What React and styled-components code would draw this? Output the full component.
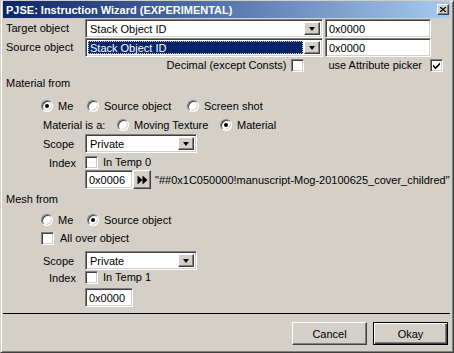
import React from "react";
import styled, { createGlobalStyle } from "styled-components";

const GlobalStyle = createGlobalStyle`
  body {
    margin: 0;
    background: #d4d0c8;
    font-family: "Liberation Sans", Arial, sans-serif;
    font-size: 11px;
    color: #000;
  }
`;

const Window = styled.div`
  width: 454px;
  height: 353px;
  box-sizing: border-box;
  display: flex;
  flex-direction: column;
  background: #d4d0c8;
  border: 1px solid;
  border-color: #d4d0c8 #404040 #404040 #d4d0c8;
  box-shadow: inset 1px 1px #fff, inset -1px -1px #808080;
  padding: 0 3px 3px 2px;
`;

const TitleBar = styled.div`
  height: 17px;
  display: flex;
  align-items: center;
  justify-content: space-between;
  padding: 0 1px 0 3px;
  background: linear-gradient(to right, #0a246a, #a6caf0);
  color: #fff;
  font-weight: bold;
  font-size: 11px;
  white-space: nowrap;
`;

const CloseButton = styled.div`
  width: 12px;
  height: 11px;
  box-sizing: border-box;
  display: flex;
  align-items: center;
  justify-content: center;
  background: #d4d0c8;
  border: 1px solid;
  border-color: #fff #404040 #404040 #fff;
  box-shadow: inset -1px -1px #808080;
`;

const Content = styled.div`
  display: flex;
  flex-direction: column;
  padding-left: 3px;
`;

const FieldRow = styled.div`
  display: grid;
  grid-template-columns: 77px 238px 106px;
  column-gap: 2px;
  align-items: center;
  height: 19px;
  margin-top: ${(p) => p.$top || 0}px;
`;

const Row = styled.div`
  display: flex;
  align-items: center;
  height: ${(p) => p.$h || 13}px;
  margin-top: ${(p) => p.$top || 0}px;
  padding-left: ${(p) => p.$left || 0}px;
  white-space: nowrap;
`;

const RightRow = styled(Row)`
  justify-content: flex-end;
  padding-right: 7px;
`;

const Label = styled.span`
  line-height: 13px;
`;

const SectionLabel = styled.div`
  line-height: 13px;
  margin-top: ${(p) => p.$top}px;
`;

const LabelCell = styled.span`
  width: ${(p) => p.$w}px;
  padding-left: ${(p) => p.$indent || 0}px;
  box-sizing: border-box;
  flex: none;
`;

const sunken = `
  box-sizing: border-box;
  background: #fff;
  border: 1px solid;
  border-color: #808080 #fff #fff #808080;
  box-shadow: inset 1px 1px #404040, inset -1px -1px #d4d0c8;
`;

const raised = `
  box-sizing: border-box;
  background: #d4d0c8;
  border: 1px solid;
  border-color: #fff #404040 #404040 #fff;
  box-shadow: inset -1px -1px #808080, inset 1px 1px #d4d0c8;
`;

const Combo = styled.div`
  ${sunken}
  width: ${(p) => p.$w}px;
  height: 19px;
  display: flex;
  padding: 2px;
`;

const ComboText = styled.div`
  flex: 1;
  display: flex;
  align-items: center;
  padding-left: 2px;
  margin-right: 1px;
  background: ${(p) => (p.$selected ? "#0a246a" : "transparent")};
  color: ${(p) => (p.$selected ? "#fff" : "#000")};
  outline: ${(p) => (p.$selected ? "1px dotted #d4d0c8" : "none")};
  outline-offset: -1px;
`;

const DropButton = styled.div`
  ${raised}
  width: 16px;
  display: flex;
  align-items: center;
  justify-content: center;
  &:after {
    content: "";
    border-left: 3.5px solid transparent;
    border-right: 3.5px solid transparent;
    border-top: 4px solid #000;
    margin-top: 1px;
  }
`;

const TextBox = styled.div`
  ${sunken}
  width: ${(p) => p.$w}px;
  height: 19px;
  display: flex;
  align-items: center;
  padding-left: 3px;
  flex: none;
`;

const Box = styled.div`
  ${sunken}
  width: 13px;
  height: 13px;
  flex: none;
  display: flex;
  align-items: center;
  justify-content: center;
  margin-left: ${(p) => p.$before || 0}px;
  margin-right: ${(p) => p.$gap ?? 5}px;
`;

const RadioCircle = styled.div`
  ${sunken}
  width: 12px;
  height: 12px;
  border-radius: 50%;
  flex: none;
  display: flex;
  align-items: center;
  justify-content: center;
  margin-right: 5px;
  &:after {
    content: "";
    width: 4px;
    height: 4px;
    border-radius: 50%;
    background: ${(p) => (p.$on ? "#000" : "transparent")};
  }
`;

const Option = styled.label`
  display: flex;
  align-items: center;
  width: ${(p) => p.$w}px;
  flex: none;
`;

const IconButton = styled.div`
  ${raised}
  width: 18px;
  height: 19px;
  display: flex;
  align-items: center;
  justify-content: center;
  flex: none;
`;

const Quote = styled.span`
  margin-left: 4px;
`;

const Separator = styled.div`
  height: 1px;
  background: #000;
  margin-top: 6px;
`;

const ButtonBar = styled.div`
  display: flex;
  justify-content: flex-end;
  gap: 6px;
  margin-top: 8px;
  padding-right: 2px;
`;

const Button = styled.div`
  ${raised}
  width: 75px;
  height: 23px;
  display: flex;
  align-items: center;
  justify-content: center;
  ${(p) =>
    p.$default &&
    `
    border: 1px solid #000;
    box-shadow: inset 1px 1px #fff, inset -1px -1px #404040, inset -2px -2px #808080;
  `}
`;

const Check = () => (
  <svg width="9" height="9" viewBox="0 0 9 9">
    <path d="M1 3.5 L3.5 6 L8 1.5 L8 3.8 L3.5 8.3 L1 5.8 Z" fill="#000" />
  </svg>
);

const Checkbox = ({ on, gap, before }) => (
  <Box $gap={gap} $before={before}>
    {on && <Check />}
  </Box>
);

const Radio = ({ on, w, children }) => (
  <Option $w={w}>
    <RadioCircle $on={on} />
    {children}
  </Option>
);

const Dropdown = ({ w, value, selected }) => (
  <Combo $w={w}>
    <ComboText $selected={selected}>{value}</ComboText>
    <DropButton />
  </Combo>
);

export default function App() {
  return (
    <>
      <GlobalStyle />
      <Window>
        <TitleBar>
          <span>PJSE: Instruction Wizard (EXPERIMENTAL)</span>
          <CloseButton>
            <svg width="6" height="5" viewBox="0 0 6 5">
              <path d="M0 0 L6 5 M6 0 L0 5" stroke="#000" strokeWidth="1.3" />
            </svg>
          </CloseButton>
        </TitleBar>
        <Content>
          <FieldRow $top={1}>
            <Label>Target object</Label>
            <Dropdown w={238} value="Stack Object ID" />
            <TextBox $w={106}>0x0000</TextBox>
          </FieldRow>
          <FieldRow>
            <Label>Source object</Label>
            <Dropdown w={238} value="Stack Object ID" selected />
            <TextBox $w={106}>0x0000</TextBox>
          </FieldRow>
          <RightRow $top={2}>
            <Label>Decimal (except Consts)</Label>
            <Checkbox before={5} gap={24} />
            <Label>use Attribute picker</Label>
            <Checkbox on before={8} gap={0} />
          </RightRow>

          <SectionLabel $top={5}>Material from</SectionLabel>
          <Row $top={9} $left={35}>
            <Radio on w={46}>Me</Radio>
            <Radio w={100}>Source object</Radio>
            <Radio w={90}>Screen shot</Radio>
          </Row>
          <Row $top={6} $left={37}>
            <LabelCell $w={74}>Material is a:</LabelCell>
            <Radio w={103}>Moving Texture</Radio>
            <Radio on w={80}>Material</Radio>
          </Row>
          <Row $top={3} $left={37} $h={19}>
            <LabelCell $w={42}>Scope</LabelCell>
            <Dropdown w={112} value="Private" />
          </Row>
          <Row $top={3} $left={37}>
            <LabelCell $w={42} $indent={6}>Index</LabelCell>
            <Checkbox />
            <Label>In Temp 0</Label>
          </Row>
          <Row $top={1} $left={79} $h={19}>
            <TextBox $w={48}>0x0006</TextBox>
            <IconButton>
              <svg width="11" height="10" viewBox="0 0 11 10">
                <path d="M0.5 0.5 L5.5 5 L0.5 9.5 Z M5.5 0.5 L10.5 5 L5.5 9.5 Z" fill="#000" />
              </svg>
            </IconButton>
            <Quote>"##0x1C050000!manuscript-Mog-20100625_cover_childred"</Quote>
          </Row>

          <SectionLabel $top={4}>Mesh from</SectionLabel>
          <Row $top={7} $left={35}>
            <Radio w={46}>Me</Radio>
            <Radio on w={100}>Source object</Radio>
          </Row>
          <Row $top={6} $left={35}>
            <Checkbox gap={6} />
            <Label>All over object</Label>
          </Row>
          <Row $top={6} $left={37} $h={19}>
            <LabelCell $w={42}>Scope</LabelCell>
            <Dropdown w={112} value="Private" />
          </Row>
          <Row $top={1} $left={37}>
            <LabelCell $w={42} $indent={6}>Index</LabelCell>
            <Checkbox />
            <Label>In Temp 1</Label>
          </Row>
          <Row $top={4} $left={79} $h={19}>
            <TextBox $w={48}>0x0000</TextBox>
          </Row>
        </Content>
        <Separator />
        <ButtonBar>
          <Button>Cancel</Button>
          <Button $default>Okay</Button>
        </ButtonBar>
      </Window>
    </>
  );
}
